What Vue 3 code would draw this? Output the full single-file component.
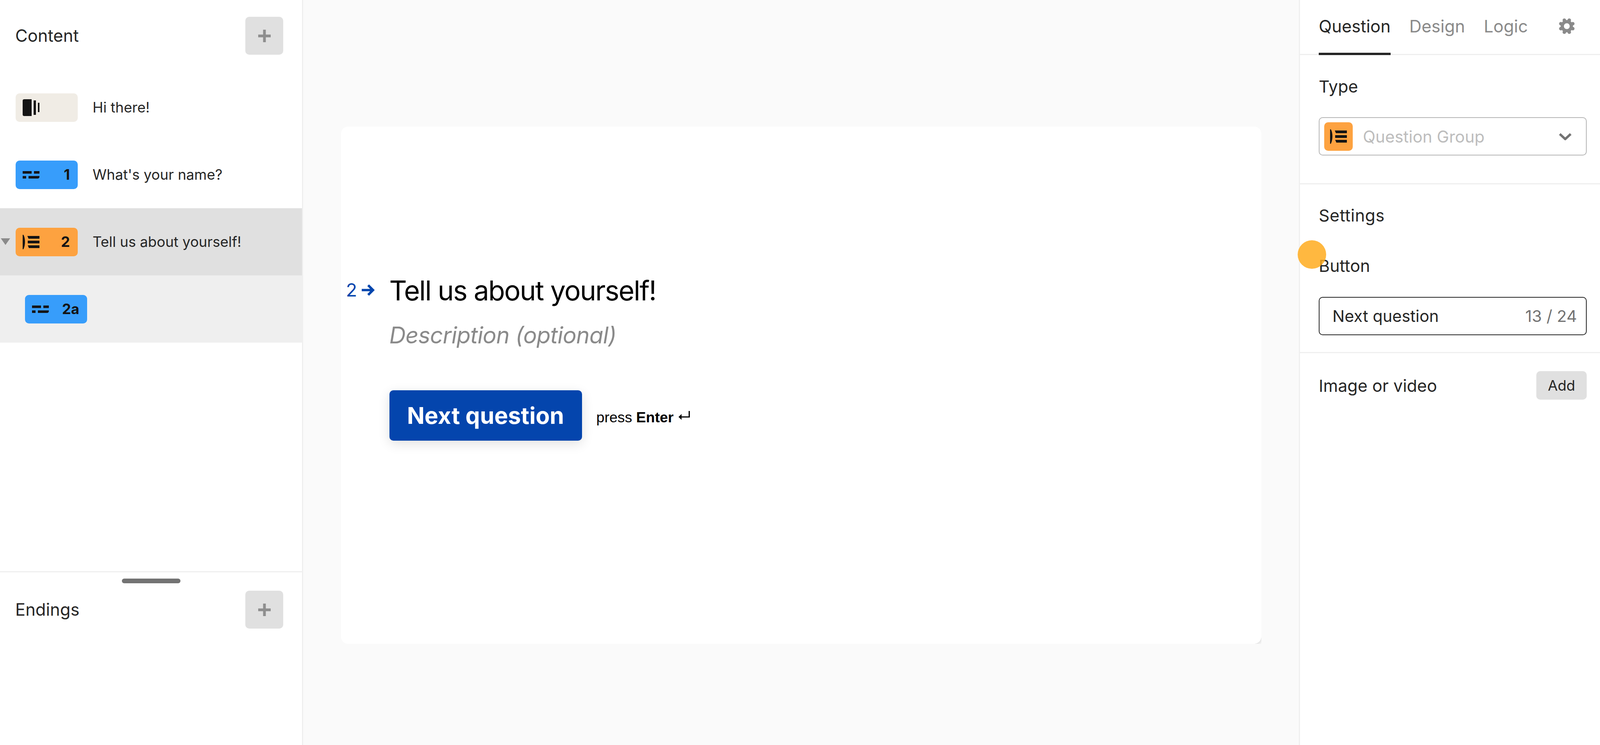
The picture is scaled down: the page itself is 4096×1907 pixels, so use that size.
<script setup>
const items = [
  { label: 'Hi there!', kind: 'welcome', num: '', cls: '' },
  { label: "What's your name?", kind: 'short', num: '1', cls: '' },
  { label: 'Tell us about yourself!', kind: 'group', num: '2', cls: 'active' },
  { label: '', kind: 'short', num: '2a', cls: 'child' },
]
const lobes = Array.from({ length: 8 }, (_, i) => {
  const a = ((22.5 + i * 45) * Math.PI) / 180
  return { cx: 28 + 22 * Math.cos(a), cy: 28 + 22 * Math.sin(a) }
})
</script>

<template>
  <div class="app">
    <aside class="left">
      <div class="list-area">
        <div class="panel-head">
          <span class="head-title">Content</span>
          <button class="plus"><svg viewBox="0 0 32 32" class="plus-icon"><path d="M16 0v32M0 16h32" /></svg></button>
        </div>
        <div v-for="item in items" :key="item.num + item.label" class="row" :class="item.cls">
          <span v-if="item.kind === 'group'" class="caret"></span>
          <span class="pill" :class="item.kind">
            <svg v-if="item.kind === 'welcome'" viewBox="0 0 43 43" class="pill-icon welcome-icon">
              <path d="M4 0h19v43H4a4 4 0 0 1-4-4V4a4 4 0 0 1 4-4z" /><rect x="28" y="3" width="6" height="37" /><rect x="39" y="9" width="4" height="24" />
            </svg>
            <svg v-else-if="item.kind === 'short'" viewBox="0 0 43 19" class="pill-icon short-icon">
              <rect x="0" y="0" width="23" height="6.5" /><rect x="29" y="0" width="14" height="6.5" /><rect x="0" y="12.5" width="9" height="6.5" /><path d="M15 12.5h28v2a4.500 4.500 0 0 1-4.500 4.500H15z" />
            </svg>
            <svg v-else viewBox="0 0 43 37" class="pill-icon group-icon">
              <path d="M0 0h2c3 5 4 12 4 18s-1 13-4 19H0z" /><path d="M12 3h31v7H15z" /><rect x="13" y="15" width="30" height="7" /><path d="M13 27h30v7H16z" />
            </svg>
            <span class="pill-num">{{ item.num }}</span>
          </span>
          <span class="row-label">{{ item.label }}</span>
        </div>
      </div>
      <div class="endings">
        <div class="handle"></div>
        <div class="endings-head">
          <span class="head-title">Endings</span>
          <button class="plus"><svg viewBox="0 0 32 32" class="plus-icon"><path d="M16 0v32M0 16h32" /></svg></button>
        </div>
      </div>
    </aside>

    <main class="canvas">
      <section class="card">
        <div class="question">
          <div class="index">
            <span class="index-num">2</span>
            <svg viewBox="0 0 32 28" class="arrow"><path d="M0 14h26M16 2l12 12-12 12" /></svg>
          </div>
          <div class="body">
            <h1 class="title">Tell us about yourself!</h1>
            <p class="desc">Description (optional)</p>
            <div class="actions">
              <button class="next">Next question</button>
              <span class="press">press <b>Enter</b>
                <svg viewBox="0 0 37 30" class="enter"><path d="M0 19.500L10 10v7.500h23V0h4v21.500H10V29z" /></svg>
              </span>
            </div>
          </div>
        </div>
      </section>
    </main>

    <aside class="right">
      <nav class="tabs">
        <span class="tab on">Question</span>
        <span class="tab">Design</span>
        <span class="tab">Logic</span>
        <svg viewBox="0 0 56 56" class="gear">
          <circle v-for="(l, i) in lobes" :key="i" :cx="l.cx" :cy="l.cy" r="6" />
          <circle cx="28" cy="28" r="21" />
          <circle cx="28" cy="28" r="10" class="gear-hole" />
        </svg>
      </nav>

      <section class="sec type-sec">
        <div class="label">Type</div>
        <div class="select">
          <span class="chip">
            <svg viewBox="0 0 43 37" class="chip-icon">
              <path d="M0 0h2c3 5 4 12 4 18s-1 13-4 19H0z" /><path d="M12 3h31v7H15z" /><rect x="13" y="15" width="30" height="7" /><path d="M13 27h30v7H16z" />
            </svg>
          </span>
          <span class="select-text">Question Group</span>
          <svg viewBox="0 0 34 19" class="chev"><path d="M3 3l14 13L31 3" /></svg>
        </div>
      </section>

      <section class="sec settings-sec">
        <div class="label settings-label">Settings</div>
        <div class="label btn-label">Button</div>
        <div class="input">
          <span>Next question</span>
          <span class="count">13 / 24</span>
        </div>
      </section>

      <section class="image-sec">
        <span class="label">Image or video</span>
        <button class="add">Add</button>
      </section>
      <div class="dot"></div>
    </aside>
  </div>
</template>

<style scoped>
.app {
  display: flex;
  width: 4096px;
  height: 1907px;
  overflow: hidden;
  background: #fafafa;
  font-family: Inter, "Liberation Sans", sans-serif;
  color: #262626;
}
button { border: 0; font-family: inherit; padding: 0; }

.left {
  width: 773px;
  flex: none;
  display: flex;
  flex-direction: column;
  background: #fff;
  border-right: 3px solid #efefef;
}
.list-area { height: 1462px; flex: none; }
.panel-head {
  height: 189px;
  box-sizing: border-box;
  padding: 43px 48px 0 39px;
  display: flex;
  justify-content: space-between;
  align-items: flex-start;
}
.head-title { font-size: 43.500px; line-height: 97px; }
.plus {
  width: 97px;
  height: 97px;
  border-radius: 10px;
  background: #e0e0e0;
  display: flex;
  align-items: center;
  justify-content: center;
}
.plus-icon { width: 32px; height: 32px; }
.plus-icon path { stroke: #8e8e8e; stroke-width: 7; fill: none; }

.row {
  position: relative;
  height: 172px;
  box-sizing: border-box;
  padding-left: 40px;
  display: flex;
  align-items: center;
}
.row.active { background: #e0e0e0; }
.row.child { background: #efefef; padding-left: 64px; }
.caret {
  position: absolute;
  left: 2px;
  top: 77px;
  border-left: 12.500px solid transparent;
  border-right: 12.500px solid transparent;
  border-top: 17px solid #8a8a8a;
}
.pill {
  width: 159px;
  height: 73px;
  flex: none;
  box-sizing: border-box;
  padding: 0 20px 0 18px;
  border-radius: 10px;
  display: flex;
  align-items: center;
  justify-content: space-between;
  background: #379dfb;
}
.pill.welcome { background: #f0ece5; }
.pill.group { background: #fda240; }
.pill-icon { width: 43px; fill: #141414; flex: none; }
.welcome-icon { height: 43px; }
.short-icon { height: 19px; }
.group-icon { height: 37px; }
.pill-num { font-size: 36.600px; font-weight: 700; color: #141414; }
.row-label { margin-left: 38px; font-size: 36.600px; color: #262626; }

.endings { flex: 1; border-top: 3px solid #efefef; }
.handle {
  width: 150px;
  height: 12px;
  margin: 16px auto 19px;
  border-radius: 6px;
  background: #737373;
}
.endings-head {
  display: flex;
  justify-content: space-between;
  align-items: center;
  padding: 0 48px 0 39px;
}

.canvas {
  flex: 1;
  min-width: 0;
  padding-top: 324px;
  display: flex;
  justify-content: center;
  align-items: flex-start;
}
.card {
  position: relative;
  width: 2356px;
  height: 1324px;
  box-sizing: border-box;
  padding: 378px 0 0 15px;
  background: #fff;
  border-radius: 18px;
}
.card::after {
  content: "";
  position: absolute;
  right: 0;
  bottom: 0;
  width: 18px;
  height: 18px;
  background: radial-gradient(circle at 0 0, #fff 0 17.500px, #e4e4e4 18px, #f6f6f6 25px);
}
.question { display: flex; align-items: flex-start; }
.index {
  width: 109px;
  height: 80px;
  flex: none;
  display: flex;
  align-items: center;
  color: #0445ad;
}
.index-num { font-size: 47px; line-height: 56px; width: 38px; margin-left: -2px; margin-right: 2px; }
.arrow { width: 33px; height: 29px; fill: none; stroke: #0445ad; stroke-width: 6; }
.body { flex: 1; }
.title {
  margin: 0;
  font-size: 70px;
  line-height: 84px;
  font-weight: 400;
  letter-spacing: -2px;
  color: #000;
}
.desc {
  margin: 37px 0 0;
  font-size: 58.500px;
  line-height: 70px;
  font-style: italic;
  letter-spacing: -.8px;
  color: #8a8a8a;
}
.actions { margin-top: 106px; display: flex; align-items: center; }
.next {
  width: 493px;
  height: 129px;
  border-radius: 10px;
  background: #0445ad;
  color: #fff;
  font-size: 59px;
  font-weight: 700;
  box-shadow: 0 8px 30px rgba(0, 0, 0, .12);
}
.press {
  margin: 9px 0 0 37px;
  font-family: "Liberation Sans", Arial, sans-serif;
  font-size: 37.600px;
  color: #000;
  display: flex;
  align-items: center;
}
.press b { margin-left: 10px; }
.enter { width: 29px; height: 23.500px; fill: #000; margin: -8px 0 0 13px; }

.right {
  position: relative;
  flex: none;
  width: 771px;
  box-sizing: border-box;
  background: #fff;
  border-left: 3px solid #efefef;
}
.tabs {
  height: 141px;
  box-sizing: border-box;
  padding: 0 64px 0 48px;
  display: flex;
  gap: 48px;
  border-bottom: 3px solid #efefef;
}
.tab {
  height: 141px;
  box-sizing: border-box;
  padding-top: 42px;
  font-size: 43.500px;
  line-height: 50px;
  color: #8a8a8a;
}
.tab.on { color: #262626; border-bottom: 6px solid #262626; }
.gear { width: 42px; height: 42px; margin: 46px 0 0 auto; fill: #8a8a8a; }
.gear-hole { fill: #fff; }

.sec { padding: 0 34px 0 48px; border-bottom: 3px solid #efefef; }
.label { font-size: 43px; line-height: 50px; color: #262626; }
.settings-label { letter-spacing: .5px; }
.type-sec { padding-top: 55px; padding-bottom: 71px; }
.select {
  margin-top: 54px;
  height: 98px;
  box-sizing: border-box;
  padding: 0 36px 0 12px;
  border: 2.600px solid #b5b5b5;
  border-radius: 10px;
  display: flex;
  align-items: center;
}
.chip {
  width: 73px;
  height: 73px;
  flex: none;
  border-radius: 10px;
  background: #fda240;
  display: flex;
  align-items: center;
  justify-content: center;
}
.chip-icon { width: 43px; height: 37px; fill: #141414; }
.select-text { flex: 1; margin-left: 26px; font-size: 42px; color: #bdbdbd; }
.chev { width: 34px; height: 19px; fill: none; stroke: #737373; stroke-width: 6; }
.settings-sec { padding-top: 54px; padding-bottom: 43px; }
.btn-label { margin-top: 79px; }
.input {
  margin-top: 55px;
  height: 98px;
  box-sizing: border-box;
  padding: 0 23px 0 33px;
  border: 2.600px solid #262626;
  border-radius: 10px;
  display: flex;
  align-items: center;
  justify-content: space-between;
  font-size: 41.500px;
}
.count { color: #737373; }
.image-sec {
  padding: 46px 34px 0 48px;
  display: flex;
  align-items: center;
  justify-content: space-between;
}
.add {
  width: 129px;
  height: 73px;
  border-radius: 10px;
  background: #e0e0e0;
  font-size: 36.600px;
  color: #262626;
}
.dot {
  position: absolute;
  left: -6px;
  top: 615px;
  width: 73px;
  height: 73px;
  border-radius: 50%;
  background: rgba(255, 171, 30, .85);
}
</style>
